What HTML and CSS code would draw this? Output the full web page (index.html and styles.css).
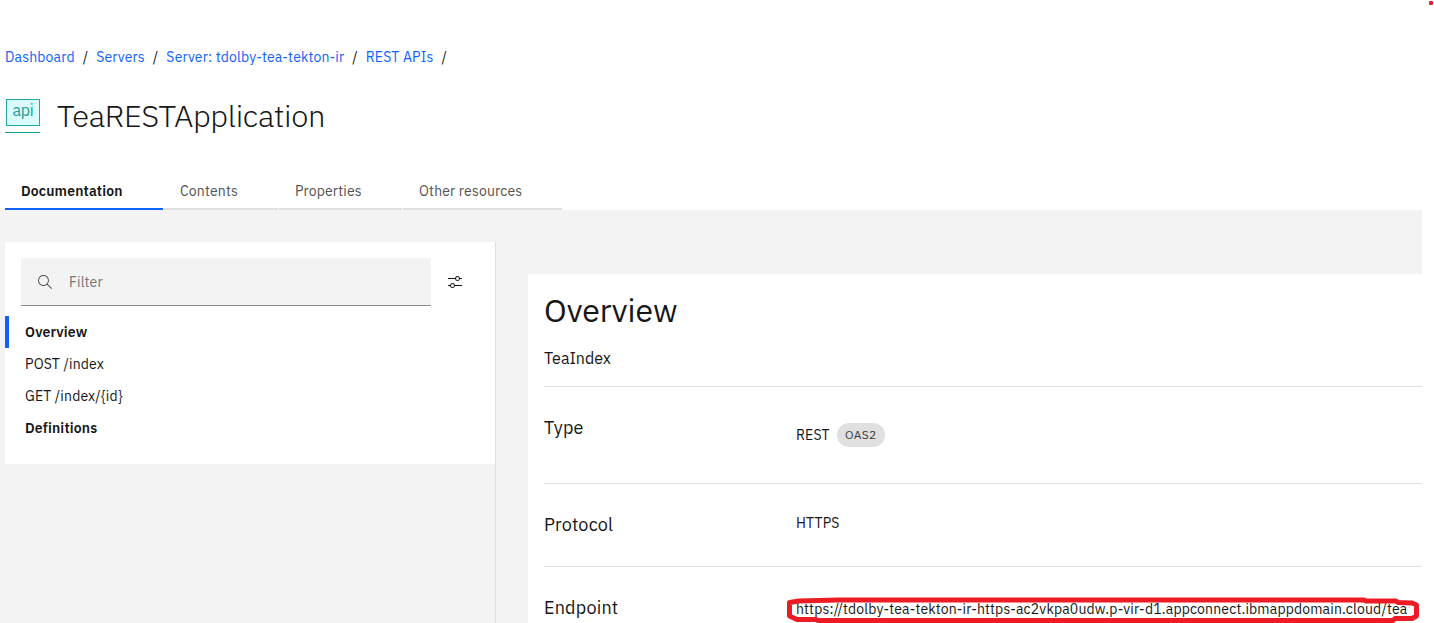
FILE: index.html
```html
<!DOCTYPE html>
<html lang="en">
<head>
<meta charset="utf-8">
<title>TeaRESTApplication</title>
<link rel="stylesheet" href="styles.css">
</head>
<body>
<div class="page">
  <nav class="breadcrumb">
    <a class="crumb" href="#">Dashboard</a><span class="sep">/</span>
    <a class="crumb" href="#">Servers</a><span class="sep">/</span>
    <a class="crumb" href="#">Server: tdolby-tea-tekton-ir</a><span class="sep">/</span>
    <a class="crumb" href="#">REST APIs</a><span class="sep">/</span>
  </nav>

  <header class="title-row">
    <div class="api-icon"><span class="api-box">api</span></div>
    <h1 class="title">TeaRESTApplication</h1>
  </header>

  <div class="tabs">
    <a class="tab tab-active" href="#">Documentation</a>
    <a class="tab tab-contents" href="#">Contents</a>
    <a class="tab tab-properties" href="#">Properties</a>
    <a class="tab tab-other" href="#">Other resources</a>
  </div>

  <main class="content">
    <aside class="sidebar">
      <div class="side-card">
        <div class="filter-row">
          <div class="search">
            <svg class="search-icon" viewBox="0 0 16 16" width="16" height="16"><path fill="#525252" d="M15 14.3 10.7 10c1.9-2.3 1.6-5.8-.7-7.7S4.2.7 2.3 3 .7 8.8 3 10.7c2 1.7 5 1.7 7 0l4.3 4.3.7-.7zM2 6.5C2 4 4 2 6.500 2S11 4 11 6.500 9 11 6.500 11 2 9 2 6.500z"/></svg>
            <span class="placeholder">Filter</span>
          </div>
          <svg class="settings-icon" viewBox="0 0 32 32" width="16" height="16"><path fill="#161616" d="M30 8h-4.100a5 5 0 0 0-9.800 0H2v2h14.100a5 5 0 0 0 9.800 0H30zm-9 4a3 3 0 1 1 3-3 3 3 0 0 1-3 3zM2 24h4.100a5 5 0 0 0 9.800 0H30v-2H15.900a5 5 0 0 0-9.800 0H2zm9-4a3 3 0 1 1-3 3 3 3 0 0 1 3-3z"/></svg>
        </div>
        <ul class="side-nav">
          <li class="item item-current">Overview</li>
          <li class="item">POST /index</li>
          <li class="item">GET /index/{id}</li>
          <li class="item item-strong">Definitions</li>
        </ul>
      </div>
    </aside>

    <section class="detail">
      <h2 class="heading">Overview</h2>
      <p class="subtitle">TeaIndex</p>
      <div class="row row-type">
        <span class="label">Type</span>
        <span class="value value-type">REST<span class="tag">OAS2</span></span>
      </div>
      <div class="row row-protocol">
        <span class="label">Protocol</span>
        <span class="value value-protocol">HTTPS</span>
      </div>
      <div class="row row-endpoint">
        <span class="label">Endpoint</span>
        <span class="value value-endpoint">https://tdolby-tea-tekton-ir-https-ac2vkpa0udw.p-vir-d1.appconnect.ibmappdomain.cloud/tea
          <svg class="marker" viewBox="0 0 634 28" width="634" height="28"><path fill="none" stroke="#ed1c24" stroke-width="5" stroke-linejoin="round" d="M3.500 7.500 13 6 52 5H578L580 6H610L612 7.500 626 8 630.500 10V21L626 23.500H609L607 25.500H32L30 24.500H11L3.500 21Z"/></svg>
        </span>
      </div>
    </section>
  </main>
  <span class="record-dot"></span>
</div>
</body>
</html>
```
FILE: styles.css
```css
* { box-sizing: border-box; }

body {
  margin: 0;
  background: #fff;
  color: #161616;
  font: 400 14px/20px "IBM Plex Sans", Roboto, "Liberation Sans", sans-serif;
  letter-spacing: .16px;
  overflow: hidden;
}

h1, h2, p, ul { margin: 0; padding: 0; }
a { text-decoration: none; }

.page {
  position: relative;
  display: flex;
  flex-direction: column;
  width: 1434px;
  height: 623px;
  overflow: hidden;
}

.breadcrumb {
  display: flex;
  height: 67px;
  padding: 47px 0 0 5px;
}
.crumb { color: #0f62fe; white-space: nowrap; }
.sep { width: 21.500px; padding-left: 8px; }

.title-row {
  display: flex;
  height: 105px;
  padding: 32px 0 0 5px;
}
.api-icon {
  width: 35px;
  height: 34px;
  margin-right: 17px;
  border-bottom: 1px solid #009d9a;
}
.api-box {
  display: block;
  width: 34px;
  height: 27px;
  margin-left: 1px;
  border: 1px solid #1fa8a3;
  background: #d9fbfb;
  color: #1d9c98;
  font-size: 16px;
  line-height: 21px;
  letter-spacing: -.3px;
  text-align: center;
}
.title {
  font-size: 31px;
  font-weight: 300;
  line-height: 34px;
  letter-spacing: -.34px;
}

.tabs {
  display: flex;
  gap: 1px;
  height: 38px;
  padding-left: 5px;
}
.tab {
  padding: 9px 0 0 16px;
  border-bottom: 2px solid #e0e0e0;
  color: #525252;
  white-space: nowrap;
}
.tab-active {
  width: 158px;
  border-color: #0f62fe;
  color: #161616;
  font-weight: 600;
}
.tab-contents { width: 114px; }
.tab-properties { width: 123px; }
.tab-other { width: 159px; }

.content {
  display: flex;
  width: 1422px;
  height: 413px;
  padding: 32px 0 0 5px;
  background: #f3f3f3;
}

.sidebar {
  flex: none;
  width: 491px;
  margin-right: 32px;
  border-right: 1px solid #e0e0e0;
}
.side-card {
  height: 222px;
  padding-top: 16px;
  background: #fff;
}
.filter-row {
  display: flex;
  align-items: center;
  padding-left: 16px;
}
.search {
  display: flex;
  align-items: center;
  width: 410px;
  height: 48px;
  padding-left: 16px;
  border-bottom: 1px solid #8d8d8d;
  background: #f3f3f3;
}
.placeholder {
  margin-left: 16px;
  color: #757575;
}
.settings-icon { margin-left: 16px; }

.side-nav { padding-top: 10px; list-style: none; }
.item {
  height: 32px;
  padding-left: 20px;
  line-height: 32px;
}
.item-current {
  padding-left: 16px;
  border-left: 4px solid #0f62fe;
  font-weight: 600;
}
.item-strong { font-weight: 600; }

.detail {
  flex: 1;
  min-width: 0;
  margin-top: 32px;
  padding: 16px 0 0 16px;
  background: #fff;
}
.heading {
  font-size: 32px;
  font-weight: 400;
  line-height: 40px;
  letter-spacing: 0;
}
.subtitle {
  height: 56px;
  padding-top: 16px;
  font-size: 16px;
  line-height: 24px;
  letter-spacing: 0;
}
.row {
  display: flex;
  border-top: 1px solid #e0e0e0;
}
.row-type { height: 97px; }
.row-protocol { height: 83px; }
.row-endpoint { height: 83px; }
.label {
  flex: none;
  width: 252px;
  padding-top: 29px;
  font-size: 18px;
  line-height: 24px;
  letter-spacing: .2px;
}
.value { white-space: nowrap; }
.value-type {
  display: flex;
  align-items: center;
  height: 24px;
  margin-top: 36px;
}
.tag {
  width: 48px;
  height: 24px;
  margin-left: 7px;
  border-radius: 12px;
  background: #e0e0e0;
  color: #393939;
  font-size: 12px;
  line-height: 24px;
  letter-spacing: .32px;
  text-align: center;
}
.value-protocol { padding-top: 29px; }
.value-endpoint {
  position: relative;
  padding-top: 32px;
}
.marker {
  position: absolute;
  top: 28px;
  left: -10px;
}

.record-dot {
  position: absolute;
  top: 1px;
  right: 1px;
  width: 4px;
  height: 4px;
  border-radius: 1px;
  background: #f0202a;
}
```
